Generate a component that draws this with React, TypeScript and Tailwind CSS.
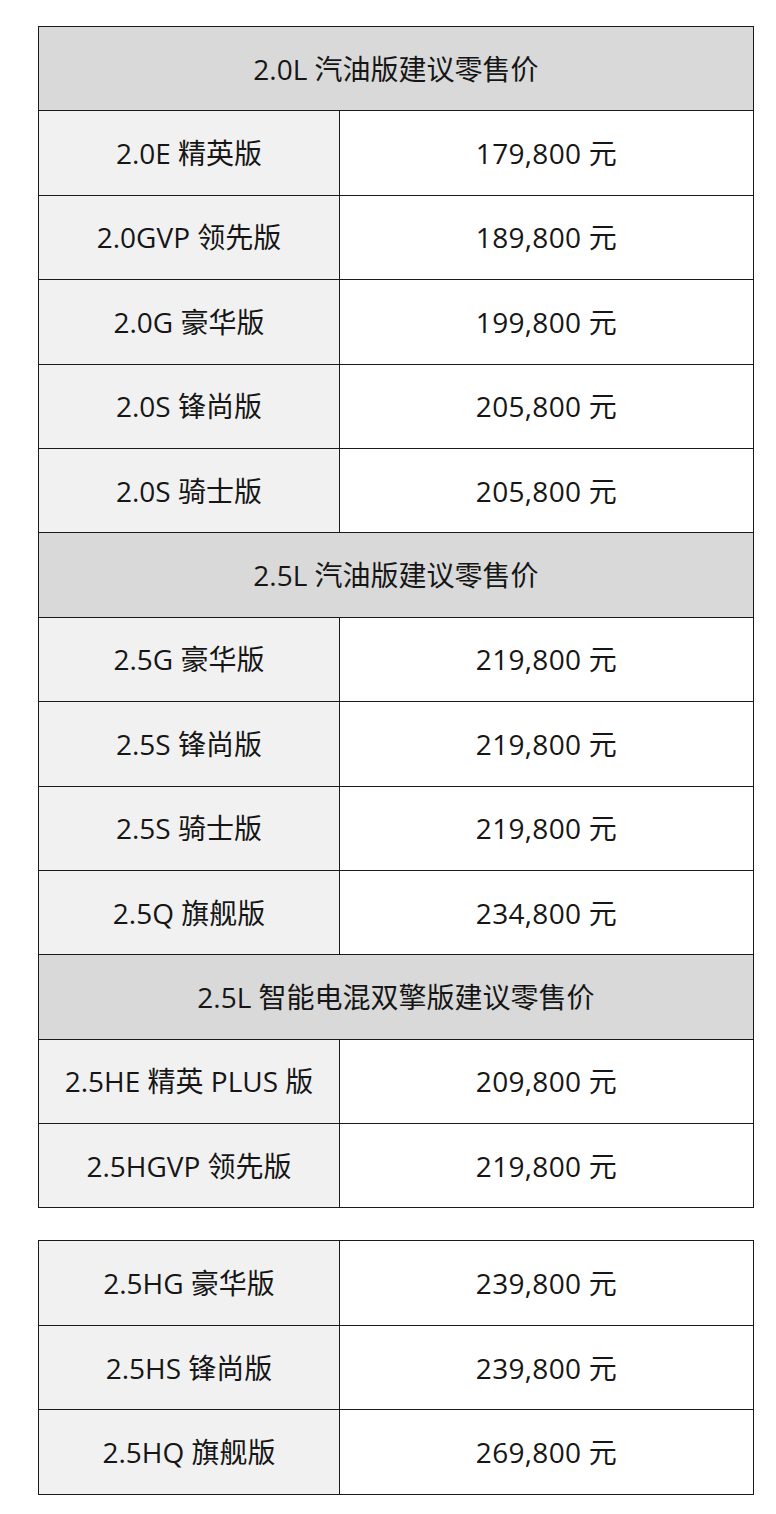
const groups = [
  {
    title: '2.0L 汽油版建议零售价',
    rows: [
      ['2.0E 精英版', '179,800 元'],
      ['2.0GVP 领先版', '189,800 元'],
      ['2.0G 豪华版', '199,800 元'],
      ['2.0S 锋尚版', '205,800 元'],
      ['2.0S 骑士版', '205,800 元'],
    ],
  },
  {
    title: '2.5L 汽油版建议零售价',
    rows: [
      ['2.5G 豪华版', '219,800 元'],
      ['2.5S 锋尚版', '219,800 元'],
      ['2.5S 骑士版', '219,800 元'],
      ['2.5Q 旗舰版', '234,800 元'],
    ],
  },
  {
    title: '2.5L 智能电混双擎版建议零售价',
    rows: [
      ['2.5HE 精英 PLUS 版', '209,800 元'],
      ['2.5HGVP 领先版', '219,800 元'],
    ],
  },
];

const extra = [
  ['2.5HG 豪华版', '239,800 元'],
  ['2.5HS 锋尚版', '239,800 元'],
  ['2.5HQ 旗舰版', '269,800 元'],
];

// box-sizing is border-box, so rows with a bottom border are 1px taller
function Row({ name, price, last }: { name: string; price: string; last?: boolean }) {
  return (
    <div className={`flex ${last ? 'h-[83.4px]' : 'h-[84.4px] border-b border-[#1a1a1a]'}`}>
      <div className="w-[301px] shrink-0 bg-[#f1f1f1] border-r border-[#1a1a1a] flex items-center justify-center">
        {name}
      </div>
      <div className="flex-1 bg-white flex items-center justify-center tracking-[0.3px]">{price}</div>
    </div>
  );
}

export default function App() {
  return (
    <div
      className="bg-white w-[776px] min-h-[1514px] pt-[26px] pl-[38px] text-[28px] text-[#161616]"
      style={{ fontFamily: '"Open Sans", "Noto Sans CJK SC", sans-serif' }}
    >
      <div className="w-[716px] border border-[#1a1a1a]">
        {groups.map((g, gi) => (
          <div key={g.title}>
            <div className="h-[84.4px] bg-[#d9d9d9] border-b border-[#1a1a1a] flex items-center justify-center">
              {g.title}
            </div>
            {g.rows.map((r, ri) => (
              <Row
                key={r[0]}
                name={r[0]}
                price={r[1]}
                last={gi === groups.length - 1 && ri === g.rows.length - 1}
              />
            ))}
          </div>
        ))}
      </div>

      <div className="w-[716px] border border-[#1a1a1a] mt-[32px]">
        {extra.map((r, i) => (
          <Row key={r[0]} name={r[0]} price={r[1]} last={i === extra.length - 1} />
        ))}
      </div>
    </div>
  );
}
